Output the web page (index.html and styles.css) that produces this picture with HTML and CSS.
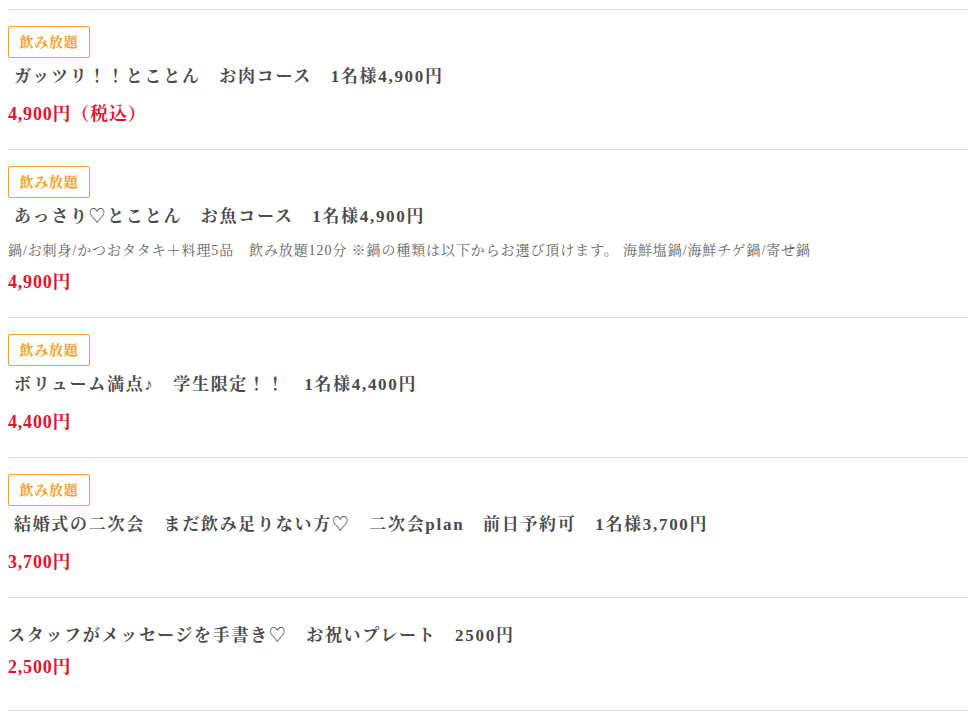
FILE: index.html
```html
<!DOCTYPE html>
<html lang="ja">
<head>
<meta charset="utf-8">
<title>コース</title>
<link rel="stylesheet" href="styles.css">
</head>
<body>
<div class="list">
  <div class="item">
    <span class="badge">飲み放題</span>
    <p class="title">&nbsp;ガッツリ！！とことん　お肉コース　1名様4,900円</p>
    <p class="price">4,900円（税込）</p>
  </div>
  <div class="item">
    <span class="badge">飲み放題</span>
    <p class="title">&nbsp;あっさり♡とことん　お魚コース　1名様4,900円</p>
    <p class="desc">鍋/お刺身/かつおタタキ＋料理5品　飲み放題120分 ※鍋の種類は以下からお選び頂けます。 海鮮塩鍋/海鮮チゲ鍋/寄せ鍋</p>
    <p class="price">4,900円</p>
  </div>
  <div class="item">
    <span class="badge">飲み放題</span>
    <p class="title">&nbsp;ボリューム満点♪　学生限定！！　1名様4,400円</p>
    <p class="price">4,400円</p>
  </div>
  <div class="item">
    <span class="badge">飲み放題</span>
    <p class="title">&nbsp;結婚式の二次会　まだ飲み足りない方♡　二次会plan　前日予約可　1名様3,700円</p>
    <p class="price">3,700円</p>
  </div>
  <div class="item item-plain">
    <p class="title">スタッフがメッセージを手書き♡　お祝いプレート　2500円</p>
    <p class="price">2,500円</p>
  </div>
</div>
</body>
</html>
```
FILE: styles.css
```css
html, body {
  margin: 0;
  padding: 0;
  background: #fff;
}
body {
  padding: 9px 4px 0 8px;
  font-family: "Liberation Serif", "Noto Serif CJK JP", "Noto Sans CJK JP", serif;
  color: #444;
}
.list {
  border-top: 1px solid #dcdcdc;
}
.item {
  border-bottom: 1px solid #dcdcdc;
  padding: 16px 0 22px;
  display: flex;
  flex-direction: column;
  align-items: flex-start;
}
.badge {
  box-sizing: border-box;
  height: 32px;
  width: 82px;
  padding-bottom: 3px;
  border: 1px solid #f6a12a;
  border-radius: 2px;
  color: #f4a023;
  font-size: 14px;
  font-weight: bold;
  letter-spacing: 0.05em;
  display: flex;
  align-items: center;
  justify-content: center;
}
.title {
  margin: 2px 0 0;
  font-size: 17px;
  line-height: 34px;
  font-weight: bold;
  letter-spacing: 0.1em;
  color: #4a4a4a;
  white-space: nowrap;
}
.desc {
  margin: 6px 0 0;
  font-size: 14px;
  line-height: 22px;
  letter-spacing: 0.9px;
  color: #666;
  white-space: nowrap;
}
.price {
  margin: 7px 0 0;
  font-size: 18px;
  line-height: 26px;
  font-weight: bold;
  letter-spacing: 0.8px;
  color: #e0142f;
}
.item-plain {
  padding: 21px 0 30px;
}
.item-plain .title {
  margin-top: 0;
}
.item-plain .price {
  margin-top: 1px;
}
```
